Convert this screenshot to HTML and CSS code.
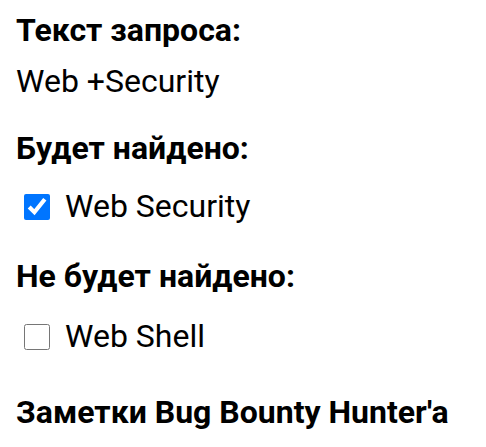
FILE: index.html
```html
<!DOCTYPE html>
<html lang="ru">
<head>
<meta charset="utf-8">
<link rel="stylesheet" href="styles.css">
</head>
<body>
<div class="page">
  <div class="title t1">Текст запроса:</div>
  <div class="text query">Web +Security</div>
  <div class="title t2">Будет найдено:</div>
  <label class="row r1"><input type="checkbox" class="box" checked><span class="text">Web Security</span></label>
  <div class="title t3">Не будет найдено:</div>
  <label class="row r2"><input type="checkbox" class="box"><span class="text">Web Shell</span></label>
  <div class="title t4">Заметки Bug Bounty Hunter'a</div>
</div>
</body>
</html>
```
FILE: styles.css
```css
html, body {
  margin: 0;
  padding: 0;
  background: #fff;
}
.page {
  display: flex;
  flex-direction: column;
  align-items: flex-start;
  padding: 0 16px;
  font-family: Roboto, "Noto Sans", sans-serif;
  font-size: 32px;
  line-height: 38px;
  color: #000;
}
.title {
  font-weight: bold;
}
.t1 { margin-top: 11px; }
.query { margin-top: 13px; }
.t2 { margin-top: 29px; }
.r1 { margin-top: 20px; }
.t3 { margin-top: 32px; }
.r2 { margin-top: 22px; }
.t4 { margin-top: 38px; }
.row {
  display: flex;
  align-items: center;
  height: 38px;
}
.box {
  width: 26px;
  height: 26px;
  margin: 2px 15px 0 8px;
}
```
